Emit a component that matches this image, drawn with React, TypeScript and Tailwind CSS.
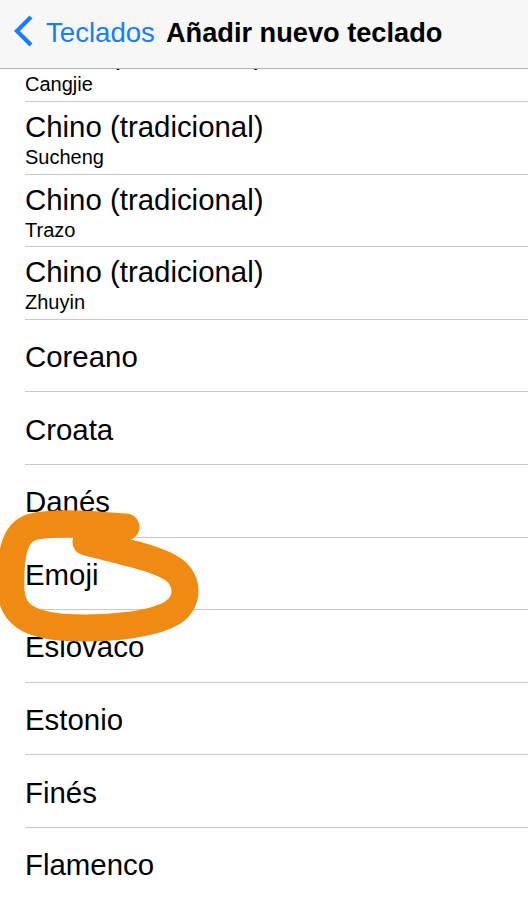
import React from "react";

type Item = { title: string; sub?: string };

const items: Item[] = [
  { title: "Chino (tradicional)", sub: "Cangjie" },
  { title: "Chino (tradicional)", sub: "Sucheng" },
  { title: "Chino (tradicional)", sub: "Trazo" },
  { title: "Chino (tradicional)", sub: "Zhuyin" },
  { title: "Coreano" },
  { title: "Croata" },
  { title: "Danés" },
  { title: "Emoji" },
  { title: "Eslovaco" },
  { title: "Estonio" },
  { title: "Finés" },
  { title: "Flamenco" },
  { title: "Francés" },
];

function Row({ item }: { item: Item }) {
  return (
    <div className="h-[72.6px] pl-[25px] bg-white">
      {item.sub ? (
        <div className="h-full border-b border-[#c8c7cc] flex flex-col pt-[10px]">
          <div className="text-[29.4px] leading-[29px] text-black">{item.title}</div>
          <div className="text-[20px] leading-[20px] text-black mt-[6px]">{item.sub}</div>
        </div>
      ) : (
        <div className="h-full border-b border-[#c8c7cc] flex items-center pt-[2px]">
          <div className="text-[29.4px] leading-[29px] text-black">{item.title}</div>
        </div>
      )}
    </div>
  );
}

export default function App() {
  return (
    <div
      className="relative w-[528px] h-[900px] overflow-hidden bg-white"
      style={{ fontFamily: '"Liberation Sans", Arial, sans-serif' }}
    >
      <div className="relative z-10 h-[69px] bg-[#f7f7f7] border-b border-[#b2b2b2] flex items-center pb-[4px]">
        <svg width="24" height="36" viewBox="0 0 24 36" className="ml-[12px]">
          <path d="M19 3 L5 17 L19 31" fill="none" stroke="#157efb" strokeWidth="4.2" strokeLinecap="butt" strokeLinejoin="miter" />
        </svg>
        <span className="ml-[10px] text-[27.6px] leading-[27px] text-[#157efb]">Teclados</span>
        <span className="ml-[11px] text-[27.2px] leading-[27px] font-bold text-black">Añadir nuevo teclado</span>
      </div>
      <div className="overflow-hidden">
        <div className="-mt-[39.6px]">
          {items.map((it, i) => (
            <Row key={i} item={it} />
          ))}
        </div>
      </div>
      <svg
        className="absolute left-0 top-0 z-20 pointer-events-none"
        width="528"
        height="900"
        viewBox="0 0 528 900"
      >
        <path
          d="M126 527 C100 525 55 521 32 527 C12 533 10 560 11 590 C12 615 30 624 60 627 C100 630 150 626 172 613 C190 602 188 580 174 570 C158 558 120 551 86 542"
          fill="none"
          stroke="#ef8a12"
          strokeWidth="27"
          strokeLinecap="round"
          strokeLinejoin="round"
        />
      </svg>
    </div>
  );
}
